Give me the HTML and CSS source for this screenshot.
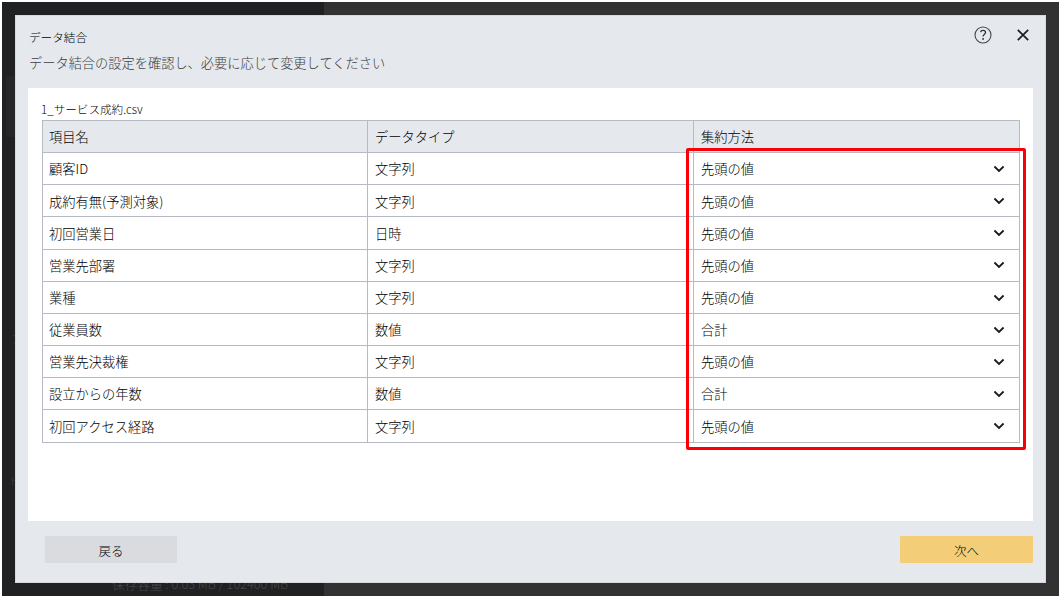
FILE: index.html
```html
<!DOCTYPE html>
<html lang="ja">
<head>
<meta charset="utf-8">
<title>データ結合</title>
<link rel="stylesheet" href="styles.css">
</head>
<body>
<div class="app">
  <div class="backdrop">
    <div class="side"><span class="side-item"></span><span class="hint hint-a">ア</span><span class="hint hint-b">H</span><span class="storage">保存容量 : 0.03 MB / 102400 MB</span></div>
  </div>
  <main class="dialog">
    <header class="head">
      <div class="head-text">
        <h1 class="title">データ結合</h1>
        <p class="lead">データ結合の設定を確認し、必要に応じて変更してください</p>
      </div>
      <div class="tools">
        <svg class="help" viewBox="0 0 18 18"><circle cx="9" cy="9" r="8" fill="none" stroke="#444649" stroke-width="1.1"/><path d="M6.6 6.2C6.8 4.9 7.7 4.3 9 4.3c1.5 0 2.5.8 2.5 2.1 0 1-.6 1.5-1.3 2.1-.8.6-1.1 1-1.1 2" fill="none" stroke="#333" stroke-width="1.35"/><circle cx="9.1" cy="12.9" r=".95" fill="#333"/></svg>
        <svg class="close" viewBox="0 0 12 12"><path d="M.8.8 11.2 11.2M11.2.8.8 11.2" fill="none" stroke="#1c1c1c" stroke-width="1.7"/></svg>
      </div>
    </header>
    <section class="panel">
      <div class="file">1_サービス成約.csv</div>
      <div class="table">
        <div class="row row-head"><div class="cell">項目名</div><div class="cell">データタイプ</div><div class="cell">集約方法</div></div>
        <div class="row"><div class="cell">顧客ID</div><div class="cell">文字列</div><div class="cell">先頭の値<svg class="chev" viewBox="0 0 12 8"><path d="M1.4 1.5 6 6 10.6 1.5"/></svg></div></div>
        <div class="row"><div class="cell">成約有無(予測対象)</div><div class="cell">文字列</div><div class="cell">先頭の値<svg class="chev" viewBox="0 0 12 8"><path d="M1.4 1.5 6 6 10.6 1.5"/></svg></div></div>
        <div class="row"><div class="cell">初回営業日</div><div class="cell">日時</div><div class="cell">先頭の値<svg class="chev" viewBox="0 0 12 8"><path d="M1.4 1.5 6 6 10.6 1.5"/></svg></div></div>
        <div class="row"><div class="cell">営業先部署</div><div class="cell">文字列</div><div class="cell">先頭の値<svg class="chev" viewBox="0 0 12 8"><path d="M1.4 1.5 6 6 10.6 1.5"/></svg></div></div>
        <div class="row"><div class="cell">業種</div><div class="cell">文字列</div><div class="cell">先頭の値<svg class="chev" viewBox="0 0 12 8"><path d="M1.4 1.5 6 6 10.6 1.5"/></svg></div></div>
        <div class="row"><div class="cell">従業員数</div><div class="cell">数値</div><div class="cell">合計<svg class="chev" viewBox="0 0 12 8"><path d="M1.4 1.5 6 6 10.6 1.5"/></svg></div></div>
        <div class="row"><div class="cell">営業先決裁権</div><div class="cell">文字列</div><div class="cell">先頭の値<svg class="chev" viewBox="0 0 12 8"><path d="M1.4 1.5 6 6 10.6 1.5"/></svg></div></div>
        <div class="row"><div class="cell">設立からの年数</div><div class="cell">数値</div><div class="cell">合計<svg class="chev" viewBox="0 0 12 8"><path d="M1.4 1.5 6 6 10.6 1.5"/></svg></div></div>
        <div class="row"><div class="cell">初回アクセス経路</div><div class="cell">文字列</div><div class="cell">先頭の値<svg class="chev" viewBox="0 0 12 8"><path d="M1.4 1.5 6 6 10.6 1.5"/></svg></div></div>
      </div>
    </section>
    <footer class="foot">
      <button class="btn btn-back">戻る</button>
      <button class="btn btn-next">次へ</button>
    </footer>
  </main>
  <div class="highlight"></div>
</div>
</body>
</html>
```
FILE: styles.css
```css
* { box-sizing: border-box; }
body { margin: 0; background: #fff; font-family: "Noto Sans CJK JP", sans-serif; font-weight: 300; font-size: 13.27px; color: #000; overflow: hidden; }
.app { position: relative; width: 1061px; height: 598px; padding: 15px; }
.backdrop { position: absolute; inset: 2px; background: #323232; }
.side { position: relative; width: 322px; height: 100%; background: #202123; overflow: hidden; }
.side-item { position: absolute; left: 4px; top: 74px; width: 30px; height: 61px; background: #252628; }
.hint { position: absolute; left: 9px; font-size: 11px; line-height: 14px; color: #3c3d3f; }
.hint-a { top: 330px; }
.hint-b { top: 471px; }
.storage { position: absolute; left: 110px; top: 573px; font-size: 12.7px; line-height: 18px; color: #48494b; white-space: nowrap; }
.dialog { position: relative; display: flex; flex-direction: column; width: 1031px; height: 568px; padding: 0 12px; background: #e5e8ed; border: 1px solid #d6d8dc; }
.head { display: flex; justify-content: space-between; height: 72px; padding: 11px 0 0 1px; }
.title { margin: 0; font-size: 11.6px; line-height: 20px; font-weight: 300; color: #000; }
.lead { margin: 6px 0 0; font-size: 13.23px; line-height: 20px; color: #3c3e42; }
.tools { display: flex; align-items: center; gap: 25px; height: 18px; padding-right: 4.5px; margin-top: -1px; }
.help { width: 18px; height: 18px; }
.close { width: 12px; height: 12px; }
.panel { height: 433px; padding: 12px 13px 0 14px; background: #fff; }
.file { height: 20px; font-size: 11.6px; line-height: 19px; margin-left: -1px; }
.table { width: 978px; border-left: 1px solid #b5bac3; border-top: 1px solid #b5bac3; }
.row { display: grid; grid-template-columns: 325px 326px 326px; height: 32.16px; }
.row-head { background: #e5e8ed; }
.cell { display: flex; align-items: center; justify-content: space-between; padding: 0.3px 14.5px 0 7px; border-right: 1px solid #b5bac3; border-bottom: 1px solid #b5bac3; }
.cell:first-child { padding-left: 6px; }
.chev { width: 12px; height: 8px; fill: none; stroke: #1a1a1a; stroke-width: 1.8; }
.foot { display: flex; justify-content: space-between; padding: 15px 0 0 17px; }
.btn { width: 132px; height: 27px; padding: 2px 0 0; border: 0; border-radius: 1px; font: inherit; font-size: 12.5px; color: #000; }
.btn-back { background: #dadbdf; }
.btn-next { width: 133px; background: #f4cd78; }
.highlight { position: absolute; left: 686px; top: 148px; width: 340px; height: 302px; border: 3px solid #f80006; border-radius: 2px; }
```
